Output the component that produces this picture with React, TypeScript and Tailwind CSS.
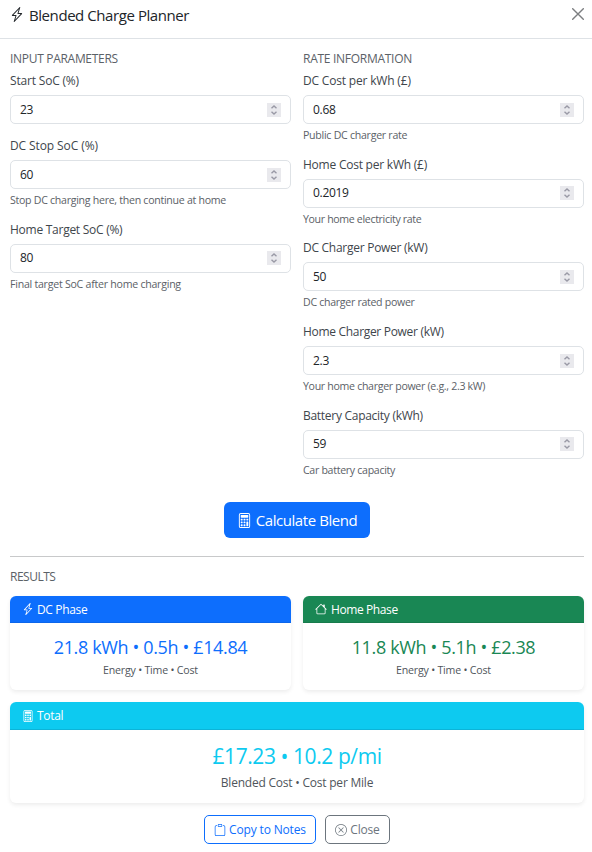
import type { ReactNode } from 'react';
import { BsLightningCharge, BsCalculator, BsHouse, BsClipboard, BsXCircle } from 'react-icons/bs';

function SectionTitle({ children, className }: { children: ReactNode; className: string }) {
  return <h2 className={`h-5 text-[12px] leading-5 text-[#5b6167] uppercase whitespace-nowrap ${className}`}>{children}</h2>;
}

function Stepper() {
  return (
    <span className="flex h-3.5 w-3.5 items-center justify-center bg-[#e9e9ed]">
      <svg width="14" height="14" viewBox="0 0 14 14" fill="none" stroke="#9a9aa6" strokeWidth="1.4">
        <path d="M4.5 5.2 7 2.9l2.5 2.3M4.5 8.8 7 11.1l2.5-2.3" />
      </svg>
    </span>
  );
}

type FieldProps = { label: string; value: string; help?: string; labelClass: string; helpClass?: string };

function Field({ label, value, help, labelClass, helpClass = '' }: FieldProps) {
  return (
    <div className="mb-3">
      <label className={`block h-5 text-[12px] leading-5 whitespace-nowrap text-[#40464c] ${labelClass}`}>{label}</label>
      <div className="mt-1 flex h-[29px] items-center justify-between rounded-[5px] border border-[#dee2e6] bg-white pr-[9px] pl-[9px]">
        <span className="text-[12px] leading-5 tracking-[-0.3px] text-[#212529]">{value}</span>
        <Stepper />
      </div>
      {help && <p className={`mt-[3px] h-[15.7px] text-[10.6px] leading-4 whitespace-nowrap text-[#5b6167] ${helpClass}`}>{help}</p>}
    </div>
  );
}

export default function App() {
  return (
    <div className="h-[852px] w-[592px] overflow-hidden bg-white font-['Open_Sans','Noto_Sans',sans-serif] text-[#212529]">
      <header className="flex h-[39px] items-start justify-between border-b border-[#dee2e6] pr-2 pl-[9px]">
        <div className="flex h-[29px] items-center">
          <BsLightningCharge className="mr-1 h-[15px] w-4" />
          <h1 className="text-[15px] leading-6 tracking-[-0.43px] whitespace-nowrap">Blended Charge Planner</h1>
        </div>
        <svg className="mt-2 h-3 w-3" viewBox="0 0 12 12" stroke="#7c7e80" strokeWidth="1.4" strokeLinecap="round">
          <path d="M.7.7l10.6 10.6M11.3.7.7 11.3" />
        </svg>
      </header>

      <main className="px-2 pl-[10px]">
        <section className="grid h-[463px] grid-cols-2 gap-3 pt-[10px]">
          <div>
            <SectionTitle className="mb-0.5 tracking-[-0.3px]">Input Parameters</SectionTitle>
            <Field label="Start SoC (%)" value="23" labelClass="tracking-[-0.18px]" />
            <Field label="DC Stop SoC (%)" value="60" help="Stop DC charging here, then continue at home" labelClass="tracking-[-0.1px]" helpClass="tracking-[-0.28px]" />
            <Field label="Home Target SoC (%)" value="80" help="Final target SoC after home charging" labelClass="tracking-[-0.26px]" helpClass="tracking-[-0.25px]" />
          </div>
          <div>
            <SectionTitle className="mb-0.5 tracking-[-0.28px]">Rate Information</SectionTitle>
            <Field label="DC Cost per kWh (£)" value="0.68" help="Public DC charger rate" labelClass="tracking-[-0.18px]" helpClass="tracking-[-0.27px]" />
            <Field label="Home Cost per kWh (£)" value="0.2019" help="Your home electricity rate" labelClass="tracking-[-0.23px]" helpClass="tracking-[-0.34px]" />
            <Field label="DC Charger Power (kW)" value="50" help="DC charger rated power" labelClass="tracking-[-0.27px]" helpClass="tracking-[-0.3px]" />
            <Field label="Home Charger Power (kW)" value="2.3" help="Your home charger power (e.g., 2.3 kW)" labelClass="tracking-[-0.31px]" helpClass="tracking-[-0.31px]" />
            <Field label="Battery Capacity (kWh)" value="59" help="Car battery capacity" labelClass="tracking-[-0.28px]" helpClass="tracking-[-0.3px]" />
          </div>
        </section>

        <button className="mx-auto flex h-9 w-[146px] items-center justify-center rounded-[6px] bg-[#0d6efd] text-[15px] leading-6 tracking-[-0.43px] whitespace-nowrap text-white">
          <BsCalculator className="mr-1 h-[15px] w-[15px]" />
          Calculate Blend
        </button>

        <hr className="mt-[18px] border-t border-[#c8c9ca]" />
        <SectionTitle className="mt-[10px] tracking-[-0.5px]">Results</SectionTitle>

        <section className="mt-[9px] grid grid-cols-2 gap-3 text-center whitespace-nowrap">
          <article className="h-[94px] rounded-[6px] bg-white shadow-[0_2px_4px_rgba(0,0,0,0.075)]">
            <h3 className="flex h-[27px] items-center rounded-t-[6px] border-b border-[#0c66eb] bg-[#0d6efd] pt-px pl-3 text-[12px] tracking-[-0.35px] text-white">
              <BsLightningCharge className="mr-[3px] mb-px h-3 w-3" />
              DC Phase
            </h3>
            <p className="mt-3 text-[18px] leading-6 tracking-[-0.36px] text-[#0d6efd]">21.8 kWh • 0.5h • £14.84</p>
            <p className="mt-[3px] text-[10.6px] leading-4 tracking-[-0.2px] text-[#4f555b]">Energy • Time • Cost</p>
          </article>
          <article className="h-[94px] rounded-[6px] bg-white shadow-[0_2px_4px_rgba(0,0,0,0.075)]">
            <h3 className="flex h-[27px] items-center rounded-t-[6px] border-b border-[#177b4c] bg-[#198754] pt-px pl-3 text-[12px] tracking-[-0.4px] text-white">
              <BsHouse className="mr-1 mb-px h-3 w-3" />
              Home Phase
            </h3>
            <p className="mt-3 text-[18px] leading-6 tracking-[-0.36px] text-[#198754]">11.8 kWh • 5.1h • £2.38</p>
            <p className="mt-[3px] text-[10.6px] leading-4 tracking-[-0.2px] text-[#4f555b]">Energy • Time • Cost</p>
          </article>
          <article className="col-span-2 h-[101px] rounded-[6px] bg-white shadow-[0_2px_4px_rgba(0,0,0,0.075)]">
            <h3 className="flex h-7 items-center rounded-t-[6px] border-b border-[#0cb4d8] bg-[#0dcaf0] pt-px pl-3 text-[12px] tracking-[-0.3px] text-white">
              <BsCalculator className="mr-[3px] mb-px h-3 w-3" />
              Total
            </h3>
            <p className="mt-3 text-[21px] leading-7 tracking-[-0.42px] text-[#0dcaf0]">£17.23 • 10.2 p/mi</p>
            <p className="mt-[3px] text-[12px] leading-5 tracking-[-0.22px] text-[#4f555b]">Blended Cost • Cost per Mile</p>
          </article>
        </section>

        <footer className="mt-3 flex justify-center gap-[9px] text-[12px] leading-5 whitespace-nowrap">
          <button className="flex h-[29px] w-28 items-center justify-center rounded-[5px] border border-[#0d6efd] tracking-[-0.16px] text-[#0d6efd]">
            <BsClipboard className="mr-[3px] h-3 w-3" />
            Copy to Notes
          </button>
          <button className="flex h-[29px] w-[65px] items-center justify-center rounded-[5px] border border-[#6c757d] tracking-[-0.2px] text-[#6c757d]">
            <BsXCircle className="mr-[3px] h-3 w-3" />
            Close
          </button>
        </footer>
      </main>
    </div>
  );
}
